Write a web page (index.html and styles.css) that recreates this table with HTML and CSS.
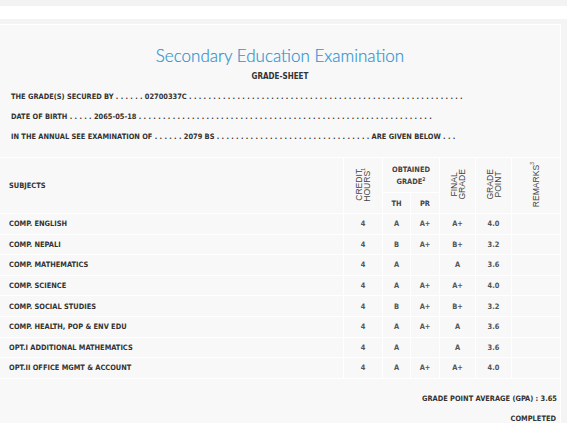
FILE: index.html
```html
<!DOCTYPE html>
<html>
<head>
<meta charset="utf-8">
<link rel="stylesheet" href="styles.css">
</head>
<body>
<div class="topbar"></div>
<div class="sheet">
  <div class="card">
    <h1 class="title">Secondary Education Examination</h1>
    <div class="subtitle">GRADE-SHEET</div>
    <div class="info">THE GRADE(S) SECURED BY . . . . . . 02700337C . . . . . . . . . . . . . . . . . . . . . . . . . . . . . . . . . . . . . . . . . . . . . . . . . . . . . . . . .</div>
    <div class="info">DATE OF BIRTH . . . . . 2065-05-18 . . . . . . . . . . . . . . . . . . . . . . . . . . . . . . . . . . . . . . . . . . . . . . . . . . . . . . . . . . . . .</div>
    <div class="info">IN THE ANNUAL SEE EXAMINATION OF . . . . . . 2079 BS . . . . . . . . . . . . . . . . . . . . . . . . . . . . . . . . ARE GIVEN BELOW . . .</div>
    <table class="grades">
      <thead>
        <tr class="h1">
          <th rowspan="2" class="subj">SUBJECTS</th>
          <th rowspan="2" class="c-credit"><span class="vert">CREDIT<br>HOURS<sup>1</sup></span></th>
          <th colspan="2" class="obt">OBTAINED<br>GRADE<sup>2</sup></th>
          <th rowspan="2" class="c-final"><span class="vert">FINAL<br>GRADE</span></th>
          <th rowspan="2" class="c-point"><span class="vert">GRADE<br>POINT</span></th>
          <th rowspan="2" class="c-rem"><span class="vert">REMARKS<sup>3</sup></span></th>
        </tr>
        <tr class="h2">
          <th class="c-th">TH</th>
          <th class="c-pr">PR</th>
        </tr>
      </thead>
      <tbody>
        <tr><td class="subj">COMP. ENGLISH</td><td>4</td><td>A</td><td>A+</td><td>A+</td><td>4.0</td><td></td></tr>
        <tr><td class="subj">COMP. NEPALI</td><td>4</td><td>B</td><td>A+</td><td>B+</td><td>3.2</td><td></td></tr>
        <tr><td class="subj">COMP. MATHEMATICS</td><td>4</td><td>A</td><td></td><td>A</td><td>3.6</td><td></td></tr>
        <tr><td class="subj">COMP. SCIENCE</td><td>4</td><td>A</td><td>A+</td><td>A+</td><td>4.0</td><td></td></tr>
        <tr><td class="subj">COMP. SOCIAL STUDIES</td><td>4</td><td>B</td><td>A+</td><td>B+</td><td>3.2</td><td></td></tr>
        <tr><td class="subj">COMP. HEALTH, POP &amp; ENV EDU</td><td>4</td><td>A</td><td>A+</td><td>A</td><td>3.6</td><td></td></tr>
        <tr><td class="subj">OPT.I ADDITIONAL MATHEMATICS</td><td>4</td><td>A</td><td></td><td>A</td><td>3.6</td><td></td></tr>
        <tr><td class="subj">OPT.II OFFICE MGMT &amp; ACCOUNT</td><td>4</td><td>A</td><td>A+</td><td>A+</td><td>4.0</td><td></td></tr>
      </tbody>
    </table>
    <div class="gpa">GRADE POINT AVERAGE (GPA) : 3.65</div>
    <div class="status">COMPLETED</div>
  </div>
</div>
</body>
</html>
```
FILE: styles.css
```css
html, body {
  margin: 0;
  padding: 0;
  background: #ffffff;
}
body {
  font-family: "DejaVu Sans Condensed", "DejaVu Sans", sans-serif;
  color: #333;
}
.topbar {
  width: 567px;
  height: 6px;
  background: #f3f3f3;
}
.sheet {
  margin-top: 13px;
  width: 567px;
  background: #f4f4f4;
  padding: 5px 5px 0 0;
  box-sizing: border-box;
  height: 420px;
}
.card {
  background: #f8f8f8;
  border-top: 1px solid #ffffff;
  border-right: 1px solid #ffffff;
  height: 100%;
  width: 561px;
  box-sizing: border-box;
}
.title {
  margin: 0;
  padding-top: 21px;
  text-align: center;
  font-family: "Lato", sans-serif;
  font-weight: 300;
  font-size: 17px;
  line-height: 20px;
  color: #2f93d1;
  -webkit-text-stroke: 0.2px #2f93d1;
}
.subtitle {
  margin-top: 6px;
  text-align: center;
  font-size: 8px;
  font-weight: bold;
  color: #333;
  line-height: 10px;
}
.info {
  padding-left: 11px;
  font-size: 7.4px;
  font-weight: bold;
  line-height: 10px;
  margin-top: 10px;
  white-space: nowrap;
  color: #333;
}
.info:first-of-type { margin-top: 11px; }
.grades {
  margin-top: 15px;
  width: 560px;
  border-collapse: collapse;
  font-size: 7.4px;
  font-weight: bold;
}
.grades th, .grades td {
  border: 1px solid #ffffff;
  padding: 0;
  text-align: center;
  color: #444;
}
.grades tr > :first-child { border-left: none; }
.grades tr > :last-child { border-right: none; }
.grades th.subj, .grades td.subj {
  text-align: left;
  padding-left: 9px;
  color: #333;
}
.grades td { height: 19.6px; color: #555; }
.h1 th { height: 32px; }
.h2 th { height: 20px; }
.c-credit { width: 38px; }
.c-th { width: 27px; }
.c-pr { width: 28px; }
.c-final { width: 35px; }
.c-point { width: 35px; }
.c-rem { width: 48px; }
.obt { line-height: 12px; padding-top: 2px !important; }
.vert {
  display: inline-block;
  writing-mode: vertical-rl;
  transform: rotate(180deg);
  line-height: 8px;
  text-align: center;
  font-family: "Liberation Sans", sans-serif;
  font-size: 8.6px;
  font-weight: normal;
  color: #444;
}
.grades sup { font-size: 5px; line-height: 0; }
.gpa {
  text-align: right;
  padding-right: 3px;
  margin-top: 15px;
  font-size: 7.4px;
  font-weight: bold;
  line-height: 10px;
}
.status {
  text-align: right;
  padding-right: 4px;
  margin-top: 10px;
  font-size: 7.4px;
  font-weight: bold;
  line-height: 10px;
}
```
